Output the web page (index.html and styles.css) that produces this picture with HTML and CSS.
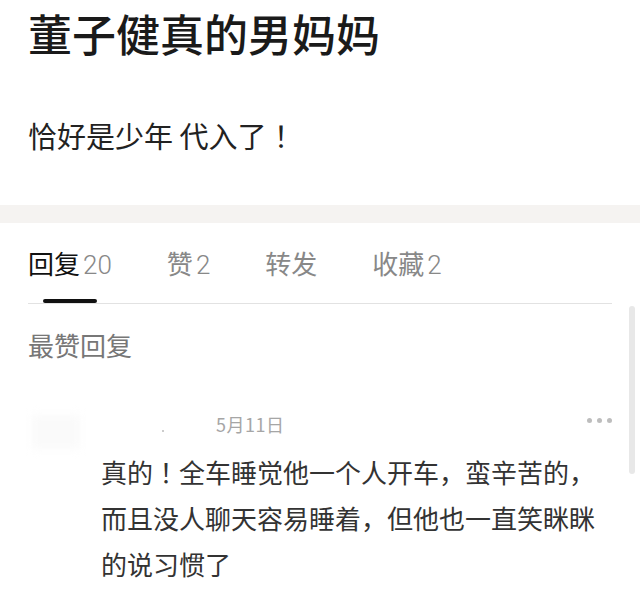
FILE: index.html
```html
<!DOCTYPE html>
<html lang="zh-CN">

<head>
	<meta charset="UTF-8">
	<title>董子健真的男妈妈</title>
	<link rel="stylesheet" href="styles.css">
</head>

<body>
	<div class="post">
		<h1 class="post-title">董子健真的男妈妈</h1>
		<p class="post-body">恰好是少年 代入了<span class="bang" lang="zh-TW">！</span></p>
	</div>
	<div class="band"></div>
	<div class="tabs">
		<div class="tab active"><span class="tab-label">回复<span class="num">20</span></span><span class="bar"></span></div>
		<div class="tab"><span class="tab-label">赞<span class="num">2</span></span></div>
		<div class="tab"><span class="tab-label">转发</span></div>
		<div class="tab"><span class="tab-label">收藏<span class="num">2</span></span></div>
	</div>
	<div class="replies">
		<div class="section-title">最赞回复</div>
		<div class="comment">
			<div class="comment-head">
				<span class="avatar"></span>
				<span class="name-dot"></span>
				<span class="date">5月11日</span>
				<span class="more"><i></i><i></i><i></i></span>
			</div>
			<p class="comment-text">真的<span class="bang" lang="zh-TW">！</span>全车睡觉他一个人开车，蛮辛苦的，而且没人聊天容易睡着，但他也一直笑眯眯的说习惯了</p>
		</div>
	</div>
	<div class="scrollbar"></div>
</body>

</html>
```

FILE: styles.css
```css
body {
	margin: 0;
	background: #fff;
	font-family: "Noto Sans CJK SC", "Noto Sans", sans-serif;
	color: #222;
	position: relative;
	overflow: hidden;
}

/* full-width exclamation sits centred in its box, as on the phone */
.bang {
	display: inline-block;
	width: 1em;
	text-align: center;
	font-family: "Noto Sans CJK TC", "Noto Sans CJK SC", sans-serif;
}

.post {
	padding: 0 28px;
}
.post-title {
	margin: 0;
	font-size: 44px;
	line-height: 66px;
	font-weight: 500;
	color: #1a1a1a;
}
.post-body {
	margin: 49px 0 50px;
	font-size: 29px;
	line-height: 40px;
	color: #222;
}

.band {
	height: 18px;
	background: #f5f3f1;
}

.tabs {
	display: flex;
	gap: 55px;
	margin: 0 28px;
	padding-top: 22px;
	border-bottom: 1px solid #e2e2e2;
}
.tab {
	display: flex;
	flex-direction: column;
	align-items: center;
	font-size: 26px;
	line-height: 36px;
	color: #888;
}
.tab.active {
	color: #111;
}
.num {
	font-family: Roboto, "Noto Sans", sans-serif;
	font-weight: 300;
	color: #888;
	margin-left: 3px;
}
.bar {
	width: 54px;
	height: 4px;
	margin-top: 16px;
	border-radius: 2px;
	background: #111;
}

.replies {
	padding: 0 28px;
}
.section-title {
	margin-top: 23px;
	font-size: 26px;
	line-height: 36px;
	color: #777;
}

.comment-head {
	display: flex;
	align-items: center;
	margin-top: 49px;
	height: 24px;
	position: relative;
}
.avatar {
	position: absolute;
	left: 4px;
	top: 3px;
	width: 48px;
	height: 34px;
	background: #fafafa;
	filter: blur(4px);
}
.name-dot {
	width: 2px;
	height: 2px;
	margin-left: 134px;
	margin-top: 14px;
	border-radius: 1px;
	background: #bbb;
}
.date {
	margin-left: 52px;
	font-size: 18px;
	line-height: 24px;
	letter-spacing: 0.5px;
	color: #a6a6a6;
}
.more {
	display: flex;
	gap: 5px;
	margin-left: auto;
	margin-top: -8px;
}
.more i {
	width: 5px;
	height: 5px;
	border-radius: 50%;
	background: #bdbdbd;
}
.comment-text {
	margin: 13px 0 0 73px;
	font-size: 26px;
	line-height: 46px;
	color: #333;
}

.scrollbar {
	position: absolute;
	right: 5px;
	top: 306px;
	width: 6px;
	height: 168px;
	border-radius: 3px;
	background: #e8e8e8;
}
```
